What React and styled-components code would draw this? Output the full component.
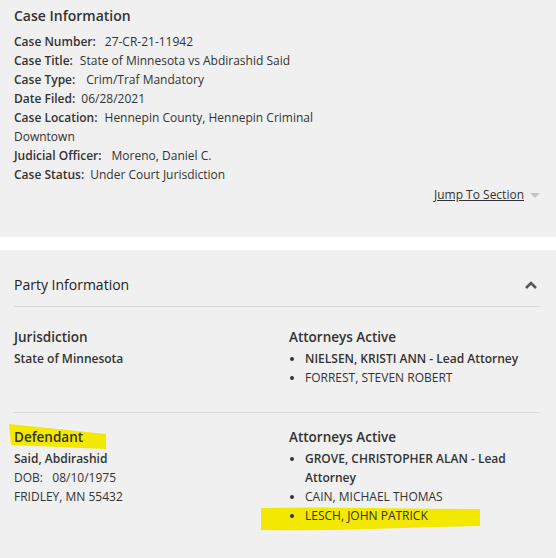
import styled, { createGlobalStyle } from "styled-components";

const GlobalStyle = createGlobalStyle`
  html, body {
    margin: 0;
    padding: 0;
    background: #fff;
  }
  body {
    font-family: "Open Sans", "Noto Sans", sans-serif;
    color: #333;
  }
`;

const caseRows = [
  { label: "Case Number:", value: "27-CR-21-11942", gap: 9 },
  { label: "Case Title:", value: "State of Minnesota vs Abdirashid Said", gap: 7 },
  { label: "Case Type:", value: "Crim/Traf Mandatory", gap: 11 },
  { label: "Date Filed:", value: "06/28/2021", gap: 6 },
  { label: "Case Location:", value: "Hennepin County, Hennepin Criminal Downtown", gap: 7 },
  { label: "Judicial Officer:", value: "Moreno, Daniel C.", gap: 10 },
  { label: "Case Status:", value: "Under Court Jurisdiction", gap: 6 },
];

const App = () => {
  return (
    <>
      <GlobalStyle />
      <Page>
        <CasePanel>
          <PanelTitle>Case Information</PanelTitle>
          <InfoList>
            {caseRows.map((row) => (
              <InfoRow key={row.label}>
                <Label>{row.label}</Label>
                <Value $gap={row.gap}>{row.value}</Value>
              </InfoRow>
            ))}
          </InfoList>
          <JumpRow>
            <JumpLink href="#">Jump To Section</JumpLink>
            <Caret />
          </JumpRow>
        </CasePanel>

        <PartyPanel>
          <PartyHeader>
            <h2>Party Information</h2>
            <svg width="14" height="10" viewBox="0 0 14 10">
              <path d="M2 8 L7 3 L12 8" fill="none" stroke="#555" strokeWidth="2.6" />
            </svg>
          </PartyHeader>

          <PartyRow>
            <div>
              <SubHead>Jurisdiction</SubHead>
              <Strong>State of Minnesota</Strong>
            </div>
            <div>
              <SubHead>Attorneys Active</SubHead>
              <Attorneys>
                <Attorney $lead>NIELSEN, KRISTI ANN - Lead Attorney</Attorney>
                <Attorney>FORREST, STEVEN ROBERT</Attorney>
              </Attorneys>
            </div>
          </PartyRow>

          <PartyRow $divided>
            <div>
              <SubHead>
                <Marker $w={97} $h={25} $x={-5} $y={-3}>
                  <svg viewBox="0 0 97 25" preserveAspectRatio="none">
                    <path d="M0 0 L97 10 L97 25 L50 23 L2 21 Z" fill="#f2e800" />
                  </svg>
                </Marker>
                Defendant
              </SubHead>
              <Strong>Said, Abdirashid</Strong>
              <Plain>DOB:&nbsp;&nbsp; 08/10/1975</Plain>
              <Plain>FRIDLEY, MN 55432</Plain>
            </div>
            <div>
              <SubHead>Attorneys Active</SubHead>
              <Attorneys>
                <Attorney $lead>GROVE, CHRISTOPHER ALAN - Lead Attorney</Attorney>
                <Attorney>CAIN, MICHAEL THOMAS</Attorney>
                <Attorney>
                  <Marker $w={219} $h={24} $x={-44} $y={1}>
                    <svg viewBox="0 0 219 24" preserveAspectRatio="none">
                      <path
                        d="M0 1 Q55 0 110 1 T219 2 L219 19 Q165 20 110 22 T0 23 Z"
                        fill="#f2e800"
                      />
                    </svg>
                  </Marker>
                  LESCH, JOHN PATRICK
                </Attorney>
              </Attorneys>
            </div>
          </PartyRow>
        </PartyPanel>
      </Page>
    </>
  );
};

const Page = styled.div`
  width: 556px;
  height: 558px;
  overflow: hidden;
  display: flex;
  flex-direction: column;
  gap: 13px;
`;

const CasePanel = styled.section`
  flex-shrink: 0;
  box-sizing: border-box;
  background: #f0f0f0;
  padding: 6px 14px 0;
  height: 237px;
`;

const PanelTitle = styled.h2`
  margin: 0 0 6px;
  font-size: 14px;
  font-weight: 600;
  line-height: 20px;
  color: #333;
`;

const InfoList = styled.div`
  width: 305px;
  font-size: 12px;
  line-height: 19px;
`;

const InfoRow = styled.div``;

const Label = styled.span`
  font-weight: 600;
`;

const Value = styled.span`
  margin-left: ${(p) => p.$gap}px;
`;

const JumpRow = styled.div`
  display: flex;
  justify-content: flex-end;
  align-items: center;
  gap: 6px;
  margin-top: 2px;
  padding-right: 2px;
`;

const JumpLink = styled.a`
  font-size: 12px;
  line-height: 18px;
  color: #333;
  text-decoration: underline;
`;

const Caret = styled.span`
  width: 0;
  height: 0;
  border-left: 5px solid transparent;
  border-right: 5px solid transparent;
  border-top: 5px solid #c4c4c4;
`;

const PartyPanel = styled.section`
  flex: 1;
  background: #f0f0f0;
  padding: 25px 16px 0 14px;
`;

const PartyHeader = styled.div`
  display: flex;
  justify-content: space-between;
  align-items: center;
  padding-bottom: 11px;
  border-bottom: 1px solid #d9d9d9;

  h2 {
    margin: 0;
    font-size: 14px;
    font-weight: 400;
    line-height: 20px;
    color: #222;
  }
  svg {
    margin-right: 2px;
  }
`;

const PartyRow = styled.div`
  display: grid;
  grid-template-columns: 275px 1fr;
  padding: ${(p) => (p.$divided ? "14px 0 0" : "20px 0 25px")};
  border-top: ${(p) => (p.$divided ? "1px solid #d9d9d9" : "none")};
  font-size: 12px;
  line-height: 19px;
`;

const SubHead = styled.div`
  position: relative;
  z-index: 0;
  font-size: 13.5px;
  font-weight: 600;
  line-height: 21px;
  margin-bottom: 1px;
`;

const Strong = styled.div`
  font-weight: 600;
`;

const Plain = styled.div``;

const Attorneys = styled.ul`
  margin: 0;
  padding: 0 0 0 16px;
  list-style: disc;
`;

const Attorney = styled.li`
  position: relative;
  z-index: 0;
  font-weight: ${(p) => (p.$lead ? 600 : 400)};
`;

const Marker = styled.span`
  position: absolute;
  z-index: -1;
  left: ${(p) => p.$x}px;
  top: ${(p) => p.$y}px;
  width: ${(p) => p.$w}px;
  height: ${(p) => p.$h}px;
  svg {
    display: block;
    width: 100%;
    height: 100%;
  }
`;

export default App;
